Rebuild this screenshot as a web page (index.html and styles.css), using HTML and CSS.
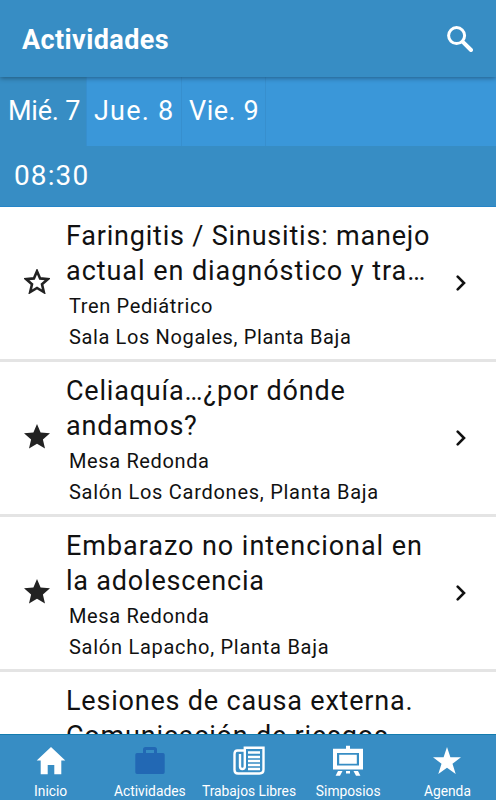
FILE: index.html
```
<!DOCTYPE html>
<html lang="es">
<head>
  <meta charset="UTF-8" />
  <meta name="viewport" content="width=device-width, initial-scale=1" />
  <title>Actividades</title>
  <link rel="stylesheet" href="styles.css">
</head>
<body>
  <header class="header">
    <h1>Actividades</h1>
    <svg class="search" viewBox="0 0 26 26" aria-hidden="true">
      <circle cx="9.6" cy="9.6" r="8"></circle>
      <path d="M15.8 15.8L24 24"></path>
    </svg>
  </header>

  <nav class="tabs">
    <a class="tab wed active">Mié. 7</a>
    <a class="tab thu">Jue. 8</a>
    <a class="tab fri">Vie. 9</a>
  </nav>

  <div class="hour">08:30</div>

  <main class="list">
    <article class="item">
      <svg class="star outline" viewBox="0 0 26 25"><path d="M13 2.2L16.1 9.4L24 10.1L18 15.3L19.8 23L13 18.9L6.2 23L8 15.3L2 10.1L9.9 9.4Z"></path></svg>
      <div class="info">
        <h2>Faringitis / Sinusitis: manejo<br><span class="wide">actual en diagnóstico y tra…</span></h2>
        <p>Tren Pediátrico</p>
        <p>Sala Los Nogales, Planta Baja</p>
      </div>
      <svg class="arrow" viewBox="0 0 10 16"><path d="M1.7 1.7L8 8L1.7 14.3"></path></svg>
    </article>
    <article class="item">
      <svg class="star" viewBox="0 0 26 25"><path d="M13 0L16.6 8.5L26 9.3L18.9 15.4L21 24.6L13 19.8L5 24.6L7.1 15.4L0 9.3L9.4 8.5Z"></path></svg>
      <div class="info">
        <h2>Celiaquía…¿por dónde<br>andamos?</h2>
        <p>Mesa Redonda</p>
        <p class="wide">Salón Los Cardones, Planta Baja</p>
      </div>
      <svg class="arrow" viewBox="0 0 10 16"><path d="M1.7 1.7L8 8L1.7 14.3"></path></svg>
    </article>
    <article class="item">
      <svg class="star" viewBox="0 0 26 25"><path d="M13 0L16.6 8.5L26 9.3L18.9 15.4L21 24.6L13 19.8L5 24.6L7.1 15.4L0 9.3L9.4 8.5Z"></path></svg>
      <div class="info">
        <h2><span class="wide">Embarazo no intencional en</span><br>la adolescencia</h2>
        <p>Mesa Redonda</p>
        <p class="wide">Salón Lapacho, Planta Baja</p>
      </div>
      <svg class="arrow" viewBox="0 0 10 16"><path d="M1.7 1.7L8 8L1.7 14.3"></path></svg>
    </article>
    <article class="item last">
      <div class="info">
        <h2>Lesiones de causa externa.<br>Comunicación de riesgos</h2>
      </div>
    </article>
  </main>

  <footer class="bottom">
    <a class="link">
      <svg viewBox="0 0 32 32"><path d="M16 2L30.3 15.5H26.3V29.3H19.3V20H12.7V29.3H5.7V15.5H1.7Z"></path></svg>
      <span>Inicio</span>
    </a>
    <a class="link current">
      <svg viewBox="0 0 32 32"><path fill-rule="evenodd" d="M9 8V4.5Q9 2 11.5 2H20.5Q23 2 23 4.5V8H29Q30.7 8 30.7 9.7V27.3Q30.7 29 29 29H3Q1.3 29 1.3 27.3V9.7Q1.3 8 3 8ZM12 8H20V5H12Z"></path></svg>
      <span>Actividades</span>
    </a>
    <a class="link">
      <svg class="news" viewBox="0 0 32 32"><path d="M11.8 22.5V2.8H30.5V24.5Q30.5 28.5 26.5 28.5H5Q1.5 28.5 1.5 25V9Q1.5 5.5 4.5 5.5H11.8M7 9V21.5Q7 24 9.3 24Q11.8 24 11.8 21.5"></path><path d="M15 7.5H27M15 12H27M15 16H27M15 20H27M15 24H27"></path></svg>
      <span>Trabajos Libres</span>
    </a>
    <a class="link">
      <svg viewBox="0 0 32 32"><path fill-rule="evenodd" d="M14 0.7H18V3.7H31V24.5H1V3.7H14ZM5 8V20.5H27V8Z"></path><path d="M7.2 9.7H24.8V18.8H7.2ZM14 26H18V28.5H14ZM6 26H10.5L8 30.7H3.6ZM21.5 26H26L28.4 30.7H24Z"></path></svg>
      <span>Simposios</span>
    </a>
    <a class="link">
      <svg viewBox="0 0 32 32"><path d="M16 2L19.4 12.2H30L21.5 18.7L24.7 29L16 22.7L7.3 29L10.5 18.7L2 12.2H12.6Z"></path></svg>
      <span>Agenda</span>
    </a>
  </footer>
</body>
</html>
```

FILE: styles.css
```
* {
  box-sizing: border-box;
}

body {
  display: flex;
  flex-direction: column;
  height: 100vh;
  margin: 0;
  overflow: hidden;
  background: #fff;
  color: #111;
  font-family: Roboto, sans-serif;
}

h1, h2, p {
  margin: 0;
}

svg {
  display: block;
  flex-shrink: 0;
}

/* Header */
.header {
  position: relative;
  display: flex;
  flex-shrink: 0;
  align-items: center;
  justify-content: space-between;
  height: 77px;
  padding: 0 23px 0 22px;
  background: #378dc4;
  color: #fff;
  box-shadow: 0 1px 5px rgba(0, 0, 0, 0.4);
}

.header h1 {
  padding-top: 2px;
  font-size: 27px;
  font-weight: 700;
  letter-spacing: 0.4px;
}

.search {
  width: 26px;
  height: 26px;
  fill: none;
  stroke: #fff;
  stroke-width: 3;
  stroke-linecap: round;
}

.search path {
  stroke-width: 4;
}

/* Days */
.tabs {
  display: flex;
  flex-shrink: 0;
  height: 69px;
  background: #3a97d9;
}

.tab {
  padding-left: 8px;
  border-right: 1px solid #378fce;
  color: #fff;
  font-size: 27px;
  line-height: 69px;
  white-space: nowrap;
}

.tab.active {
  background: #378dc4;
}

.wed {
  width: 87px;
  letter-spacing: -0.2px;
}

.thu {
  width: 95px;
  padding-left: 7px;
  letter-spacing: 1.2px;
}

.fri {
  width: 84px;
  padding-left: 7px;
  letter-spacing: 0.5px;
}

.hour {
  flex-shrink: 0;
  height: 61px;
  padding-left: 14px;
  background: #378dc4;
  border-bottom: 1px solid #2585c8;
  color: #fff;
  font-size: 28px;
  line-height: 60px;
  letter-spacing: 1.1px;
}

/* List */
.list {
  flex: 1;
  overflow: hidden;
}

.item {
  display: flex;
  align-items: center;
  height: 155px;
  padding: 0 30px 0 24px;
  border-bottom: 3px solid #e4e4e4;
}

.item.last {
  padding-left: 50px;
}

.star {
  width: 26px;
  height: 25px;
  margin-bottom: 3px;
  fill: #222;
}

.star.outline {
  fill: none;
  stroke: #222;
  stroke-width: 2.6;
}

.info {
  flex: 1;
  align-self: flex-start;
  padding: 12px 0 0 16px;
  white-space: nowrap;
}

.info h2 {
  margin-bottom: 2px;
  font-size: 27px;
  font-weight: 400;
  line-height: 35px;
  letter-spacing: 0.8px;
}

.info h2 .wide {
  letter-spacing: 0.95px;
}

.info p {
  padding-left: 3px;
  font-size: 20px;
  line-height: 30.5px;
  letter-spacing: 0.63px;
}

.info p.wide {
  letter-spacing: 0.73px;
}

.arrow {
  width: 10px;
  height: 16px;
  fill: none;
  stroke: #111;
  stroke-width: 2.6;
  stroke-linecap: round;
}

/* Bottom menu */
.bottom {
  display: flex;
  flex-shrink: 0;
  height: 66px;
  padding-left: 1px;
  margin-right: -1px;
  background: #378dc4;
  border-top: 1px solid #147cae;
}

.link {
  display: flex;
  flex: 1 1 0;
  flex-direction: column;
  align-items: center;
  padding-top: 10px;
  color: #fff;
  font-size: 13.8px;
  line-height: 18px;
  white-space: nowrap;
}

.link svg {
  width: 32px;
  height: 32px;
  margin-bottom: 5px;
  fill: #fff;
}

.link.current svg {
  fill: #2268b4;
}

.link .news {
  fill: none;
  stroke: #fff;
  stroke-width: 2.4;
}
```
